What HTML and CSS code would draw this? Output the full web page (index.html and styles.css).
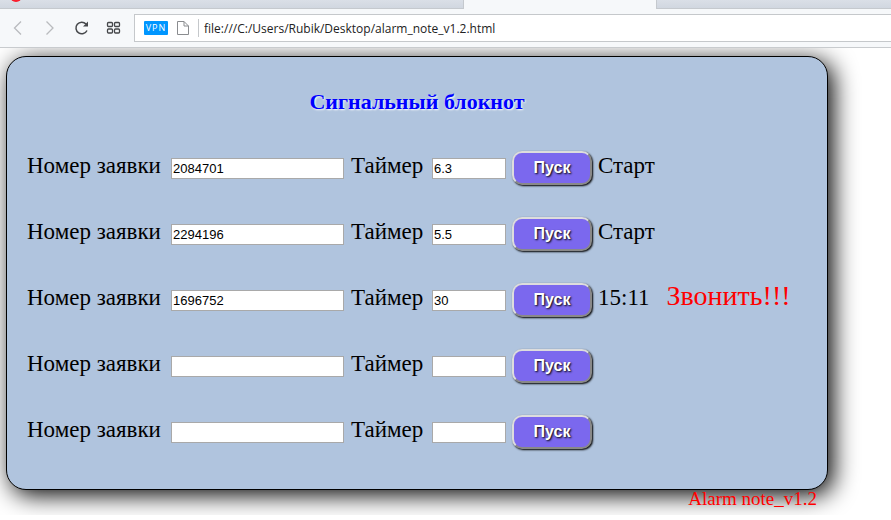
FILE: index.html
```html
<!DOCTYPE html>
<html lang="ru">
<head>
<meta charset="utf-8">
<title>Сигнальный блокнот</title>
<link rel="stylesheet" href="styles.css">
</head>
<body>
<header class="browser">
  <div class="tabs">
    <div class="tab tab-first"><svg class="favicon" width="12" height="9" viewBox="0 0 12 9" aria-hidden="true"><circle cx="6" cy="-4" r="6" fill="#fa1e2d"/></svg></div>
    <div class="tab tab-active"></div>
    <div class="tab tab-rest"></div>
  </div>
  <div class="toolbar">
    <nav class="nav">
      <button class="nav-button" type="button" aria-label="Назад"><svg width="16" height="16" viewBox="0 0 16 16"><path d="M11 1.500L4.500 8l6.500 6.500" fill="none" stroke="#b9bbbe" stroke-width="1.300"/></svg></button>
      <button class="nav-button" type="button" aria-label="Вперёд"><svg width="16" height="16" viewBox="0 0 16 16"><path d="M4.500 1.500L11 8l-6.500 6.500" fill="none" stroke="#b9bbbe" stroke-width="1.300"/></svg></button>
      <button class="nav-button" type="button" aria-label="Обновить"><svg width="16" height="16" viewBox="0 0 16 16"><path d="M12 4A5.800 5.800 0 1 0 13 10.500" fill="none" stroke="#45474a" stroke-width="1.500"/><path d="M14 1.500V6.500H9z" fill="#45474a"/></svg></button>
      <button class="nav-button" type="button" aria-label="Экспресс-панель"><svg width="16" height="16" viewBox="0 0 16 16"><g fill="none" stroke="#45474a" stroke-width="1.300"><rect x="1.500" y="2.500" width="5" height="4" rx="1"/><rect x="8.500" y="2.500" width="5" height="4" rx="1"/><rect x="1.500" y="9" width="5" height="4" rx="1"/><rect x="8.500" y="9" width="5" height="4" rx="1"/></g></svg></button>
    </nav>
    <div class="address">
      <span class="vpn">VPN</span>
      <svg class="page-icon" width="12" height="14" viewBox="0 0 12 14" aria-hidden="true"><path d="M1 .5H7L11.500 5V13.500H.5V.5zM7 .5V5H11.500" fill="none" stroke="#8a8c8f"/></svg>
      <input class="url" type="text" aria-label="Адрес" value="file:///C:/Users/Rubik/Desktop/alarm_note_v1.2.html">
    </div>
  </div>
</header>
<main class="page">
  <section class="card">
    <h1 class="title">Сигнальный блокнот</h1>
    <form class="row">
      <label class="label" for="n1">Номер заявки</label><input class="field" id="n1" type="text" value="2084701">
      <label class="label" for="t1">Таймер</label><input class="field" id="t1" type="text" value="6.3">
      <button class="start" type="button">Пуск</button>
      <output class="status">Старт</output>
    </form>
    <form class="row">
      <label class="label" for="n2">Номер заявки</label><input class="field" id="n2" type="text" value="2294196">
      <label class="label" for="t2">Таймер</label><input class="field" id="t2" type="text" value="5.5">
      <button class="start" type="button">Пуск</button>
      <output class="status">Старт</output>
    </form>
    <form class="row">
      <label class="label" for="n3">Номер заявки</label><input class="field" id="n3" type="text" value="1696752">
      <label class="label" for="t3">Таймер</label><input class="field" id="t3" type="text" value="30">
      <button class="start" type="button">Пуск</button>
      <output class="status">15:11<span class="call">Звонить!!!</span></output>
    </form>
    <form class="row">
      <label class="label" for="n4">Номер заявки</label><input class="field" id="n4" type="text">
      <label class="label" for="t4">Таймер</label><input class="field" id="t4" type="text">
      <button class="start" type="button">Пуск</button>
      <output class="status"></output>
    </form>
    <form class="row">
      <label class="label" for="n5">Номер заявки</label><input class="field" id="n5" type="text">
      <label class="label" for="t5">Таймер</label><input class="field" id="t5" type="text">
      <button class="start" type="button">Пуск</button>
      <output class="status"></output>
    </form>
  </section>
  <footer class="version">Alarm note_v1.2</footer>
</main>
</body>
</html>
```
FILE: styles.css
```css
* { box-sizing: border-box; }
body {
  margin: 0;
  background: #fff;
  color: #000;
  font-family: "Liberation Serif", "Times New Roman", serif;
  font-size: 23px;
}
.browser {
  position: relative;
  z-index: 1;
  background: #f6f8fa;
  border-bottom: 1px solid #c8cbce;
}
.tabs { display: flex; height: 9px; overflow: hidden; }
.tab {
  background: linear-gradient(#dadfe7, #d1d7e0);
  border-bottom: 1px solid #c5c9ce;
}
.tab-first { width: 464px; border-right: 1px solid #c5c9ce; padding-left: 10px; }
.tab-active { width: 192px; background: none; border: 0; }
.tab-rest { flex: 1; border-left: 1px solid #c5c9ce; }
.favicon { display: block; }
.toolbar { display: flex; padding: 5px 0; }
.nav { display: flex; align-items: center; gap: 16px; padding: 0 12px 0 10px; }
.nav-button { width: 16px; height: 16px; padding: 0; border: 0; background: none; }
.nav-button svg { display: block; }
.address {
  flex: 1;
  display: flex;
  align-items: center;
  height: 28px;
  padding-left: 9px;
  border: 1px solid #c5c8cb;
  border-right: 0;
  background: #fff;
}
.vpn {
  width: 24px;
  border-radius: 1px;
  background: #0096ff;
  color: #fff;
  font: 9px/14px "Open Sans", sans-serif;
  letter-spacing: 1px;
  text-align: center;
}
.page-icon { margin: 0 9px; }
.url {
  flex: 1;
  height: 18px;
  padding: 0 5px;
  border: 0;
  border-left: 1px solid #c5c8cb;
  background: none;
  color: #222;
  font: 12px "Open Sans", sans-serif;
}
.page { max-width: 834px; padding: 8px 6px; }
.card {
  padding: 28px 20px 20px;
  border: 1px solid #000;
  border-radius: 20px;
  background: #b0c4de;
  box-shadow: 5px 5px 25px #000;
}
.title {
  margin: 0 0 20px;
  color: #00f;
  font-size: 22px;
  line-height: 34px;
  text-align: center;
  text-shadow: 1px 1px 2px #fff;
}
.row {
  display: grid;
  grid-template-columns: 144px 180px 81px 80px 86px 1fr;
  align-items: baseline;
  height: 66px;
  margin: 0;
  padding-top: 9px;
  line-height: 36px;
  white-space: nowrap;
}
.field {
  width: 173px;
  height: 21px;
  padding: 1px;
  border: 1px solid #a9a9a9;
  background: #fff;
  font: 13px "Liberation Sans", Arial, sans-serif;
}
.field:nth-of-type(2) { width: 74px; }
.start {
  width: 80px;
  height: 34px;
  border: 2px outset #ddd;
  border-radius: 10px;
  background: #7b68ee;
  box-shadow: 1px 1px 2px #000;
  color: #fff;
  font: bold 16px "Liberation Sans", Arial, sans-serif;
  text-shadow: 1px 1px 2px #000;
}
.call { margin-left: 17px; color: #f00; font-size: 28px; line-height: 1; }
.version {
  position: relative;
  padding-right: 11px;
  color: #f00;
  font-size: 19px;
  line-height: 17px;
  text-align: right;
}
```
